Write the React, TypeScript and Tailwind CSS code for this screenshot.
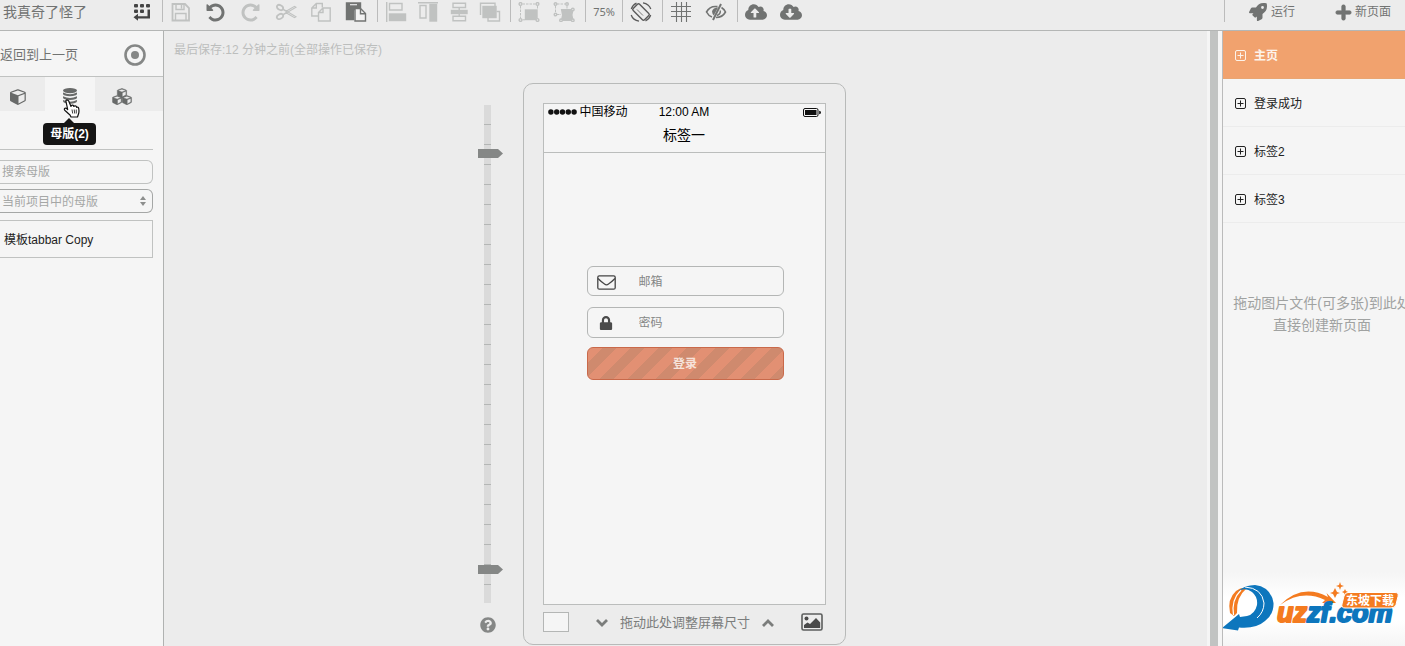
import type { ReactNode } from "react";
import { FaCloudDownloadAlt, FaCloudUploadAlt, FaLock, FaPlus, FaQuestionCircle, FaRocket } from "react-icons/fa";

const CUBE =
  "M896 1629l640-349v-636l-640 233v752zm-64-865l698-254-698-254-698 254zm832-252v768q0 35-18 65t-49 47l-704 384q-28 16-61 16t-61-16l-704-384q-31-17-49-47t-18-65v-768q0-40 23-73t61-47l704-256q22-8 44-8t44 8l704 256q38 14 61 47t23 73z";
const UNDO =
  "M1664 896q0 156-61 298t-164 245-245 164-298 61q-172 0-327-72.5t-264-204.5q-7-10-6.5-22.5t8.5-20.5l137-138q10-9 25-9 16 2 23 12 73 95 179 147t225 52q104 0 198.5-40.5t163.5-109.5 109.5-163.5 40.5-198.5-40.5-198.5-109.5-163.5-163.5-109.5-198.5-40.5q-98 0-188 35.5t-160 101.5l137 138q31 30 14 69-17 40-59 40h-448q-26 0-45-19t-19-45v-448q0-42 40-59 39-17 69 14l130 129q107-101 244.5-156.5t284.5-55.5q156 0 298 61t245 164 164 245 61 298z";

function Group({ children }: { children: ReactNode }) {
  return <div className="flex h-full items-center border-r border-[#bbb] pt-0.5 pr-1">{children}</div>;
}

function Tool({ label, off, narrow, children }: { label: string; off?: boolean; narrow?: boolean; children: ReactNode }) {
  return (
    <button
      type="button"
      aria-label={label}
      className={`flex h-5 items-center justify-center ${narrow ? "w-[31px]" : "w-[35px]"} ${off ? "text-[#c0c2c1]" : "text-[#717372]"}`}
    >
      {children}
    </button>
  );
}

function Svg({ children }: { children: ReactNode }) {
  return (
    <svg viewBox="0 0 22 20" className="h-5 w-[22px] shrink-0" fill="none" stroke="currentColor" strokeWidth="1.4">
      {children}
    </svg>
  );
}

function Header() {
  return (
    <header className="flex h-[31px] shrink-0 items-center border-b border-[#b4b6b5] bg-[#ececec] pb-2 text-[#717372]">
      <div className="flex h-full w-[163px] shrink-0 items-center justify-between border-r border-[#bbb] pt-0.5 pr-[11px] pl-[3px]">
        <h1 className="text-sm">我真奇了怪了</h1>
        <button type="button" aria-label="展开" className="text-[#444]">
          <svg viewBox="0 0 18 18" className="size-[18px]" fill="currentColor">
            <rect x="1" y="1" width="4" height="3.500" rx="1" />
            <rect x="7" y="1" width="4" height="3.500" rx="1" />
            <rect x="13" y="1" width="4" height="3.500" rx="1" />
            <rect x="1" y="6.500" width="4" height="3.500" rx="1" />
            <rect x="7" y="6.500" width="4" height="3.500" rx="1" />
            <path d="M14.500 6.500H17V15.500H5v2.300L.5 14.300 5 10.800V13.200h9.500z" />
          </svg>
        </button>
      </div>

      <Group>
        <Tool label="保存" off>
          <Svg>
            <path d="M2.500 2h12.500l4 4v12.500h-16.500z" strokeWidth="1.800" />
            <path d="M6 2v5.500h8V2M11.500 2.500v4M5.500 18.500v-7h10.500v7" />
          </Svg>
        </Tool>
        <Tool label="撤销">
          <svg viewBox="0 0 1792 1792" className="size-[21px]" fill="currentColor"><path d={UNDO} /></svg>
        </Tool>
        <Tool label="重做" off>
          <svg viewBox="0 0 1792 1792" className="size-[21px] -scale-x-100" fill="currentColor"><path d={UNDO} /></svg>
        </Tool>
        <Tool label="剪切" off>
          <Svg>
            <ellipse cx="5" cy="5.500" rx="3.300" ry="2.300" transform="rotate(28 5 5.500)" strokeWidth="1.800" />
            <ellipse cx="5" cy="14.500" rx="3.300" ry="2.300" transform="rotate(-28 5 14.500)" strokeWidth="1.800" />
            <path d="M8 7.500l3 1.800 8.500-5 1.500 1-13 7.700M8 7l13 7.700-1.500 1-8.500-5-3 1.800" strokeWidth="1.100" />
          </Svg>
        </Tool>
        <Tool label="复制" off>
          <Svg>
            <path d="M8.500 14H1.800V6l4.500-4.500h6v4M6.300 1.500V6H1.800" />
            <path d="M8.500 10.500L13 6h7.200v13H8.500zM13 6v4.500H8.500" />
          </Svg>
        </Tool>
        <Tool label="粘贴">
          <Svg>
            <path d="M1.500 1h14v4.500h-5L8.500 8.500v9h-7z" fill="currentColor" />
            <path d="M5 2.700h7" stroke="#e8e8e8" strokeWidth="1.200" />
            <path d="M10 6.500h5.500l5 5V19H10z" fill="#f2f2f2" />
            <path d="M15.500 6.500v5.200h5" />
          </Svg>
        </Tool>
      </Group>

      <div className="flex h-full items-center pl-[3px]">
        <Group>
          <Tool label="左对齐" off narrow>
            <Svg>
              <path d="M.7 0v20M3.500 1.500h12.500v6.500H3.500z" />
              <rect x="3.500" y="12" width="16" height="6.500" fill="currentColor" />
            </Svg>
          </Tool>
          <Tool label="顶对齐" off narrow>
            <Svg>
              <path d="M1 .7h20M3 3.500h6v12.500H3z" />
              <rect x="13" y="2.500" width="6.500" height="16.500" fill="currentColor" />
            </Svg>
          </Tool>
          <Tool label="垂直居中" off narrow>
            <Svg>
              <path d="M5 1.300h12.500v4.200H5zM5 14.300h12.500v4.400H5zM11.200 5.500v9" />
              <rect x="3.500" y="8.500" width="15.500" height="3" fill="currentColor" />
            </Svg>
          </Tool>
          <Tool label="层级" off narrow>
            <Svg>
              <path d="M1.500 13V1.200h14.500v3M9 16v3h11.500v-9.500h-3" />
              <rect x="4" y="4.500" width="13" height="11" fill="currentColor" />
            </Svg>
          </Tool>
          <span className="w-px" />
        </Group>
      </div>

      <Group>
        <Tool label="组合" off>
          <Svg>
            <path d="M2.500 4v12M4.500 2h13M19.500 4v3M4.500 17.800h3" strokeWidth="1" strokeDasharray="2.500 1" />
            <rect x="7.500" y="8" width="11.500" height="9.500" fill="currentColor" />
            <g fill="#ececec">
              <circle cx="2.500" cy="2" r="1.400" /><circle cx="19.500" cy="2" r="1.400" />
              <circle cx="2.500" cy="18" r="1.400" /><circle cx="19.500" cy="18" r="1.400" />
            </g>
          </Svg>
        </Tool>
        <Tool label="取消组合" off>
          <Svg>
            <path d="M2.500 4v7M4 2h8M14 4v4M4 12.500h4" strokeWidth="1" strokeDasharray="2.500 1" />
            <path d="M9 8h10.500l-1 5 1 5H9l1-5z" fill="currentColor" strokeWidth="2" />
            <g fill="#ececec">
              <circle cx="2.500" cy="2" r="1.300" /><circle cx="14" cy="2" r="1.300" /><circle cx="2.500" cy="12.500" r="1.300" />
              <circle cx="19.800" cy="7.500" r="1.300" /><circle cx="8" cy="18.300" r="1.300" /><circle cx="19.800" cy="18.300" r="1.300" />
            </g>
          </Svg>
        </Tool>
      </Group>

      <button type="button" className="h-full w-[37px] border-r border-[#bbb] pt-0.5 font-['Noto_Sans','Open_Sans',sans-serif] text-[11px]">
        75%
      </button>

      <Group>
        <Tool label="旋转">
          <Svg>
            <g stroke="#5a5a5a">
              <rect x="6.500" y="2" width="9" height="16" rx="1.500" transform="rotate(-45 11 10)" />
              <path d="M7 7.500l6 6" strokeWidth=".8" />
              <path d="M1.300 7A10 10 0 0 1 6.500 1.200M20.700 13A10 10 0 0 1 15.500 18.800" strokeWidth="1.300" />
              <path d="M13 .8q6 1 7.800 6.200M9 19.200q-6-1-7.800-6.200" strokeWidth="1.300" />
            </g>
          </Svg>
        </Tool>
      </Group>
      <Group>
        <Tool label="网格">
          <Svg>
            <path d="M6.500 0v20M11.500 0v20M16.500 0v20M1 4.500h20M1 9.500h20M1 14.500h20" strokeWidth="1.100" />
          </Svg>
        </Tool>
        <Tool label="隐藏">
          <Svg>
            <path d="M12.500 4.600Q5 3.500 1.500 10q2 3.800 5.500 5M16.500 5.500q3 2 4 4.500-3 5.500-9.500 5.500" strokeWidth="1.600" />
            <path d="M16 2L8 18" strokeWidth="2" />
            <path d="M13 5.500q-5 0-6 4 .2 2.500 1.800 4z" fill="currentColor" stroke="none" />
            <path d="M15.300 8.500q.5 3.500-3.300 5" />
          </Svg>
        </Tool>
      </Group>
      <div className="flex h-full items-center pt-0.5">
        <Tool label="上传"><FaCloudUploadAlt className="h-[18px] w-[22px]" /></Tool>
        <Tool label="下载"><FaCloudDownloadAlt className="h-[18px] w-[22px]" /></Tool>
      </div>

      <div className="ml-auto flex h-full w-[181px] shrink-0 items-center justify-between border-l border-[#bbb] pt-0.5 pr-[14px] pl-6 text-xs">
        <button type="button" className="flex items-center gap-1"><FaRocket className="size-[18px]" />运行</button>
        <button type="button" className="flex items-center gap-[3px]">
          <FaPlus className="size-[17px]" stroke="currentColor" strokeWidth="30" />
          新页面
        </button>
      </div>
    </header>
  );
}

function HandCursor() {
  return (
    <svg viewBox="0 0 17 19" className="pointer-events-none absolute top-[22px] left-[18px] h-[19px] w-[17px]" fill="#fff" stroke="#111" strokeWidth="1.200">
      <path d="M3 2.500Q2.500 1 4 .8 5.200.8 5.700 2L8 7.500q.3-1.500 1.600-1.300 1 .2 1.200 1.300.7-1 1.700-.6 1 .3 1.200 1.400 1.600-.5 2 1.200.7 3.500-.4 6L14.500 18H8l-1-2-5-4.500q-1.300-1.500 0-2.200 1-.4 2.700 1.200z" strokeLinejoin="round" />
      <path d="M9 10.500l.7 4M11.200 10.500l.5 4M13.300 10.500v4" strokeWidth=".8" />
    </svg>
  );
}

function Sidebar() {
  return (
    <aside className="w-[164px] shrink-0 border-r border-[#b0b2b1] bg-[#f5f5f5]">
      <div className="flex h-[46px] items-center justify-between border-b border-[#c0c2c1] pt-0.5 pr-[17px] text-[13px] text-[#717372]">
        <a href="#back">返回到上一页</a>
        <button type="button" aria-label="定位" className="text-[#858786]">
          <svg viewBox="0 0 22 22" className="size-[22px]" fill="none" stroke="currentColor">
            <circle cx="11" cy="11" r="9.500" strokeWidth="2.600" />
            <circle cx="11" cy="11" r="4" fill="currentColor" stroke="none" />
          </svg>
        </button>
      </div>
      <nav className="flex h-[34px] bg-[#ececec] pt-1 text-[#686a69]">
        <button type="button" aria-label="组件" className="flex w-[45px] items-center justify-center pr-2">
          <svg viewBox="0 0 1792 1792" className="size-[17px]" fill="currentColor"><path d={CUBE} /></svg>
        </button>
        <div className="relative -mt-1 flex w-[50px] justify-center bg-[#f5f5f5] pt-[11px]">
          <button type="button" aria-label="母版" className="h-4">
            <svg viewBox="0 0 14 16" className="h-4 w-[14px]" fill="currentColor">
              <ellipse cx="7" cy="2.600" rx="7" ry="2.600" />
              <path d="M0 4.500q7 3.400 14 0v1.500q-.5 2-7 2.300Q.5 8 0 6zM0 8.200q7 3.400 14 0v1.500q-.5 2-7 2.300Q.5 11.700 0 9.700zM0 12q7 3.400 14 0v1.300q-.5 2-7 2.500Q.5 15.300 0 13.300z" />
            </svg>
          </button>
          <div className="absolute top-[46px] -left-[2px] flex h-[22px] w-[53px] items-center justify-center rounded bg-[#151515] text-xs font-bold text-white" role="tooltip">
            <svg viewBox="0 0 10 5" className="absolute -top-[5px] left-[21px] h-[5px] w-[10px]"><path d="M0 5L5 0l5 5z" fill="#151515" /></svg>
            母版(2)
          </div>
          <HandCursor />
        </div>
        <button type="button" aria-label="图标" className="flex w-[54px] items-center justify-center">
          <svg viewBox="0 0 3584 2900" className="h-[17px] w-[21px]" fill="currentColor" stroke="currentColor" strokeWidth="70">
            <path d={CUBE} transform="translate(900 -50) scale(.96)" />
            <path d={CUBE} transform="translate(80 1160) scale(.96)" />
            <path d={CUBE} transform="translate(1740 1160) scale(.96)" />
          </svg>
        </button>
      </nav>
      <div className="mr-[10px] flex flex-col border-[#c0c2c1] pt-[38px] text-xs">
        <hr className="mb-[10px] border-[#c0c2c1]" />
        <input
          aria-label="搜索母版"
          placeholder="搜索母版"
          className="mb-[5px] h-6 w-full rounded-r-md border border-l-0 border-[#c0c2c1] bg-transparent pl-[2px] placeholder:text-[#a5a7a6]"
        />
        <div className="relative mb-[7px] flex">
          <select aria-label="母版来源" className="h-6 w-full appearance-none rounded-r-md border border-l-0 border-[#a5a7a6] bg-transparent pt-0.5 pl-[2px] text-[#a5a7a6]">
            <option>当前项目中的母版</option>
          </select>
          <svg viewBox="0 0 6 12" className="pointer-events-none absolute top-[6px] right-[7px] h-3 w-[6px]" fill="#8c8e8d">
            <path d="M0 5l3-4 3 4zM0 7h6l-3 4z" />
          </svg>
        </div>
        <button type="button" className="flex h-[38px] items-center border border-l-0 border-[#c0c2c1] pt-0.5 pl-1 text-[#222]">模板tabbar Copy</button>
      </div>
    </aside>
  );
}

const TICKS = Array.from({ length: 24 }, (_, i) => i);

function Handle({ label, className }: { label: string; className: string }) {
  return (
    <button type="button" aria-label={label} className={`absolute -left-[6px] text-[#858786] ${className}`}>
      <svg viewBox="0 0 25 9" className="h-[9px] w-[25px]" fill="currentColor"><path d="M0 0h20l5 4.500L20 9H0z" /></svg>
    </button>
  );
}

function Ruler() {
  return (
    <div className="mr-5 flex w-[25px] flex-col pt-[22px] pl-[6px]">
      <div className="relative h-[498px] w-[7px] bg-[#dadada]">
        {TICKS.map((t) => (
          <div key={t} className="h-5 border-b border-[#b4b6b5]" />
        ))}
        <Handle label="上边界" className="top-[44px]" />
        <Handle label="下边界" className="top-[460px]" />
      </div>
      <button type="button" aria-label="帮助" className="mt-[14px] -ml-1 text-[#858786]">
        <FaQuestionCircle className="size-4" />
      </button>
    </div>
  );
}

function Chevron({ up }: { up?: boolean }) {
  return (
    <svg viewBox="0 0 12 8" className="h-2 w-3" fill="none" stroke="currentColor" strokeWidth="2.800">
      <path d={up ? "M1 7l5-5 5 5" : "M1 1l5 5 5-5"} />
    </svg>
  );
}

function Phone() {
  return (
    <section className="w-[323px] rounded-[10px] border border-[#b8bab9] px-[19px] pt-[19px] pb-3">
      <div className="flex h-[502px] flex-col border border-[#bbbdbc] bg-[#f5f5f5]">
        <div className="h-[49px] border-b border-[#bbbdbc] text-black">
          <div className="grid h-[13px] grid-cols-3 items-center px-1 text-xs">
            <div className="flex items-center gap-[3px]">
              <svg viewBox="0 0 30 6" className="h-[6px] w-[29px]" fill="#111">
                <circle cx="3" cy="3" r="2.800" /><circle cx="9" cy="3" r="2.800" /><circle cx="15" cy="3" r="2.800" /><circle cx="21" cy="3" r="2.800" /><circle cx="27" cy="3" r="2.800" />
              </svg>
              中国移动
            </div>
            <div className="text-center">12:00 AM</div>
            <svg viewBox="0 0 18 9" className="h-[9px] w-[18px] justify-self-end" fill="none">
              <rect x=".5" y=".5" width="14.500" height="8" rx="1.500" stroke="#111" />
              <rect x="2" y="2" width="11.500" height="5" fill="#111" />
              <path d="M16.200 2.800q1.800.2 1.800 1.700t-1.800 1.700z" fill="#111" />
            </svg>
          </div>
          <div className="flex h-9 items-center justify-center text-sm">标签一</div>
        </div>
        <form className="flex flex-col pt-[113px] pr-[41px] pl-[43px] text-xs" onSubmit={(e) => e.preventDefault()}>
          <label className="mb-[11px] flex h-[30px] items-center rounded-md border border-[#b4b6b5] pt-0.5 pl-[9px]">
            <svg viewBox="0 0 19 15" className="h-[15px] w-[19px] shrink-0" fill="none" stroke="#444" strokeWidth="1.300">
              <rect x=".8" y=".8" width="17.400" height="13.400" rx="1.500" />
              <path d="M1 3.500q4 4 6.500 5.500 2 1.600 4 0Q14 7.500 18 3.500" />
            </svg>
            <input aria-label="邮箱" placeholder="邮箱" className="ml-[23px] w-full min-w-0 bg-transparent placeholder:text-[#858786]" />
          </label>
          <label className="mb-[9px] flex h-[31px] items-center rounded-md border border-[#b4b6b5] pl-[9px]">
            <span className="flex w-[19px] shrink-0 justify-center text-[#4a4a4a]"><FaLock className="size-[14px]" /></span>
            <input type="text" aria-label="密码" placeholder="密码" className="ml-[23px] w-full min-w-0 bg-transparent placeholder:text-[#858786]" />
          </label>
          <button
            type="submit"
            className="h-[33px] rounded-md border border-[#c9694a] bg-[repeating-linear-gradient(135deg,#e29073_0_10px,#cf8a6e_10px_20px)] font-bold text-[#f6e2da]"
          >
            登录
          </button>
        </form>
      </div>
      <div className="mt-[7px] flex h-5 items-center justify-between text-[13px] text-[#7b7d7c]">
        <button type="button" aria-label="背景颜色" className="h-5 w-[26px] border border-[#b4b6b5] bg-[#f5f5f5]" />
        <div className="flex items-center gap-3 pt-0.5">
          <button type="button" aria-label="缩小"><Chevron /></button>
          <span>拖动此处调整屏幕尺寸</span>
          <button type="button" aria-label="放大"><Chevron up /></button>
        </div>
        <button type="button" aria-label="背景图片" className="mr-[2px]">
          <svg viewBox="0 0 22 18" className="h-[18px] w-[22px]">
            <rect x="1" y="1" width="20" height="16" rx="1.500" fill="none" stroke="#5c5e5d" strokeWidth="1.600" />
            <circle cx="5.500" cy="5.500" r="2" fill="#4a4a4a" />
            <path d="M3 15v-3l3.500-2.500L9 11l6-6 4.200 4.500V15z" fill="#4a4a4a" />
          </svg>
        </button>
      </div>
    </section>
  );
}

const PAGES = ["主页", "登录成功", "标签2", "标签3"];

function Logo() {
  return (
    <svg viewBox="0 0 184 74" className="mt-auto h-[74px] w-[184px] shrink-0" role="img" aria-label="uzzf.com 东坡下载">
      <defs>
        <linearGradient id="glow" x1="0" y1="0" x2="0" y2="1">
          <stop offset="0" stopColor="#f5f5f5" />
          <stop offset=".35" stopColor="#fff" />
          <stop offset=".65" stopColor="#fff" />
          <stop offset="1" stopColor="#f5f5f5" />
        </linearGradient>
      </defs>
      <rect width="184" height="74" fill="url(#glow)" />
      <path d="M7 41Q4 27 13 19 18 15 24 16 13 25 14 41L11 44z" fill="#f47b20" />
      <path d="M10.500 43Q8 28 18 18" stroke="#fff" strokeWidth="1.200" fill="none" />
      <path d="M15 19Q23 15 29 20 35 25 34 33 32 42 24 44L17 45 16 42-1 56 15 58.500 16 55.500Q33 57 42 49 51 42 50.500 31 48 15 32 13 22 13 15 19z" fill="#0d76bd" />
      <path d="M22 15Q39 16 41 31 41 40 34 46" fill="none" stroke="#fff" strokeWidth="1" />
      <path d="M57 33Q79 11 105 25l-1.500-4L113 31l-14 0 3-3Q79 17 57 33z" fill="#f47b20" />
      <text x="54" y="50" fontFamily="'Liberation Sans', sans-serif" fontSize="27" fontWeight="700" fontStyle="italic" strokeWidth="2" strokeLinejoin="round">
        <tspan fill="#f47b20" stroke="#f47b20">uz</tspan>
        <tspan fill="#0d76bd" stroke="#0d76bd">zf.com</tspan>
      </text>
      <path d="M110 20l2-4 2 4 3 1-3 1-2 4-2-4-3-1zM116 13l1-3 1 3 3 1-3 1-1 3-1-3-3-1zM121 19l1-2 1 2 2 1-2 1-1 2-1-2-2-1z" fill="#f47b20" />
      <path d="M125 20.500h47q4 0 3 4l-2 8q-1 3.500-5 3.500h-46q-4 0-3-4l2-8q1-3.500 4-3.500z" fill="#f47b20" stroke="#fff" />
      <text x="123" y="32.500" fill="#fff" fontFamily="'Noto Sans CJK SC', sans-serif" fontSize="12" fontWeight="700">东坡下载</text>
    </svg>
  );
}

function Pages() {
  return (
    <aside className="flex w-[182px] shrink-0 flex-col overflow-hidden bg-[#f5f5f5]">
      <ul className="text-xs">
        {PAGES.map((name, i) => (
          <li key={name}>
            <a
              href={`#page-${i + 1}`}
              className={`flex h-12 items-center gap-2 border-b pt-0.5 pl-3 ${i === 0 ? "border-[#e9a572] bg-[#f1a26e] font-bold text-[#fdf3ea]" : "border-[#ececec] text-[#222]"}`}
            >
              <svg viewBox="0 0 11 11" className="size-[11px]" fill="none" stroke="currentColor">
                <rect x=".5" y=".5" width="10" height="10" rx="1.500" />
                <path d="M5.500 2.500v6M2.500 5.500h6" />
              </svg>
              {name}
            </a>
          </li>
        ))}
      </ul>
      <p className="w-[198px] pt-[69px] text-center text-sm leading-[22px] whitespace-nowrap text-[#a0a2a1]">
        拖动图片文件(可多张)到此处
        <br />
        直接创建新页面
      </p>
      <Logo />
    </aside>
  );
}

export default function App() {
  return (
    <div className="flex min-h-screen flex-col overflow-hidden bg-[#ececec] font-['Liberation_Sans','Noto_Sans_CJK_SC',sans-serif]">
      <Header />
      <div className="flex flex-1">
        <Sidebar />
        <main className="min-w-0 flex-1 pr-[3px]">
          <p className="mb-[15px] flex h-[37px] items-center pl-[10px] text-xs text-[#bcbebd]">最后保存:12 分钟之前(全部操作已保存)</p>
          <div className="grid grid-cols-[1fr_auto_1fr]">
            <div className="flex justify-end"><Ruler /></div>
            <Phone />
          </div>
        </main>
        <div className="flex w-4 shrink-0 border-r border-[#bbb] bg-[#f5f5f5] pl-[3px]">
          <div className="w-2 bg-[#c1c3c2]" />
        </div>
        <Pages />
      </div>
    </div>
  );
}
